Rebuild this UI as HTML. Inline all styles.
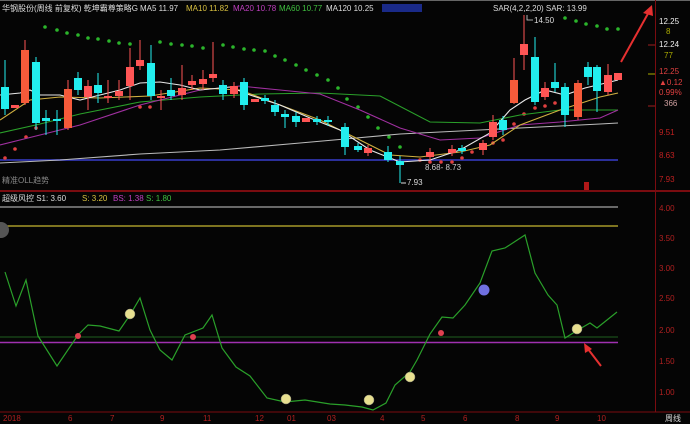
<!DOCTYPE html><html><head><meta charset="utf-8"><style>
body{margin:0;background:#000;width:690px;height:424px;overflow:hidden;font-family:"Liberation Sans","Noto Sans CJK SC",sans-serif}
svg{display:block}
text{font-size:8px}
</style></head><body>
<svg width="690" height="424" viewBox="0 0 690 424">
<rect width="690" height="424" fill="#050505"/>
<line x1="0" y1="0.5" x2="690" y2="0.5" stroke="#666"/>
<line x1="655.5" y1="0" x2="655.5" y2="412" stroke="#7a0c10"/>
<line x1="0" y1="191" x2="690" y2="191" stroke="#7a0c10" stroke-width="2"/>
<line x1="0" y1="412" x2="690" y2="412" stroke="#7a0c10"/>
<line x1="0" y1="160" x2="618" y2="160" stroke="#2b2f9a" stroke-width="2"/>
<text x="2" y="11" fill="#ddd">华钢股份(周线 前复权) 乾坤霸尊策略G</text>
<text x="140" y="11" fill="#ddd">MA5 11.97</text>
<text x="186" y="11" fill="#d8c040">MA10 11.82</text>
<text x="233" y="11" fill="#c040c0">MA20 10.78</text>
<text x="279" y="11" fill="#40c040">MA60 10.77</text>
<text x="326" y="11" fill="#ddd">MA120 10.25</text>
<rect x="382" y="4" width="40" height="8" fill="#1a2a88"/>
<text x="493" y="11" fill="#ddd">SAR(4,2,2,20) SAR: 13.99</text>
<g fill="#2bb52b">
<circle cx="45" cy="27" r="1.8"/><circle cx="57" cy="30" r="1.8"/><circle cx="67" cy="33" r="1.8"/><circle cx="78" cy="35" r="1.8"/><circle cx="88" cy="38" r="1.8"/><circle cx="98" cy="39" r="1.8"/><circle cx="109" cy="41" r="1.8"/><circle cx="119" cy="43" r="1.8"/><circle cx="130" cy="44" r="1.8"/><circle cx="160" cy="42" r="1.8"/><circle cx="171" cy="44" r="1.8"/><circle cx="182" cy="45" r="1.8"/><circle cx="192" cy="46" r="1.8"/><circle cx="203" cy="48" r="1.8"/><circle cx="223" cy="45" r="1.8"/><circle cx="233" cy="47" r="1.8"/><circle cx="244" cy="49" r="1.8"/><circle cx="254" cy="50" r="1.8"/><circle cx="265" cy="51" r="1.8"/><circle cx="275" cy="56" r="1.8"/><circle cx="285" cy="60" r="1.8"/><circle cx="296" cy="65" r="1.8"/><circle cx="306" cy="70" r="1.8"/><circle cx="317" cy="75" r="1.8"/><circle cx="328" cy="80" r="1.8"/><circle cx="338" cy="88" r="1.8"/><circle cx="347" cy="99" r="1.8"/><circle cx="358" cy="107" r="1.8"/><circle cx="368" cy="117" r="1.8"/><circle cx="378" cy="128" r="1.8"/><circle cx="389" cy="137" r="1.8"/><circle cx="400" cy="147" r="1.8"/><circle cx="565" cy="18" r="1.8"/><circle cx="576" cy="21" r="1.8"/><circle cx="586" cy="24" r="1.8"/><circle cx="597" cy="26" r="1.8"/><circle cx="607" cy="29" r="1.8"/><circle cx="618" cy="29" r="1.8"/>
</g>
<g fill="#e04040">
<circle cx="5" cy="158" r="1.8"/><circle cx="15" cy="149" r="1.8"/><circle cx="26" cy="137" r="1.8"/><circle cx="36" cy="128" r="1.8"/><circle cx="140" cy="107" r="1.8"/><circle cx="150" cy="107" r="1.8"/><circle cx="420" cy="160" r="1.8"/><circle cx="430" cy="162" r="1.8"/><circle cx="441" cy="162" r="1.8"/><circle cx="452" cy="162" r="1.8"/><circle cx="462" cy="158" r="1.8"/><circle cx="472" cy="152" r="1.8"/><circle cx="483" cy="147" r="1.8"/><circle cx="493" cy="143" r="1.8"/><circle cx="503" cy="140" r="1.8"/><circle cx="514" cy="124" r="1.8"/><circle cx="524" cy="114" r="1.8"/><circle cx="535" cy="108" r="1.8"/><circle cx="545" cy="106" r="1.8"/><circle cx="555" cy="103" r="1.8"/>
</g>
<g fill="none" stroke-width="1.1">
<polyline stroke="#bbb" points="0,163 60,160 140,154 220,150 300,143 345,139 400,134 480,130 540,127 600,124 618,123"/>
<polyline stroke="#2aa02a" points="0,133 40,124 80,114 140,102 200,97 260,94 320,93 380,96 430,122 480,123 520,115 560,110 618,110"/>
<polyline stroke="#a030a0" points="0,145 40,135 80,125 140,105 200,90 240,86 280,90 320,94 360,110 400,128 440,140 480,138 520,125 560,122 600,118 618,110"/>
<polyline stroke="#d0b040" points="0,120 30,100 60,97 100,98 150,96 200,88 240,90 280,105 320,120 360,140 390,155 420,157 460,152 490,145 520,125 560,110 600,97 618,93"/>
<polyline stroke="#e8e8e8" points="0,95 20,93 30,90 40,95 60,95 80,100 100,95 120,90 140,83 160,82 180,85 200,90 230,87 250,95 280,105 310,118 340,130 370,150 400,162 430,160 460,150 490,133 510,110 525,100 545,90 565,95 585,88 610,82 618,80"/>
</g>
<g id="candles">
<line x1="5" y1="60" x2="5" y2="115" stroke="#2ee" /><rect x="1" y="87" width="8" height="22" fill="#2ee"/>
<rect x="11" y="105" width="8" height="3" fill="#f55"/>
<line x1="25" y1="40" x2="25" y2="105" stroke="#f55"/><rect x="21" y="50" width="8" height="53" fill="#f65a3a"/>
<line x1="36" y1="57" x2="36" y2="130" stroke="#2ee"/><rect x="32" y="62" width="8" height="61" fill="#2ee"/>
<line x1="46" y1="110" x2="46" y2="135" stroke="#2ee"/><rect x="42" y="118" width="8" height="3" fill="#2ee"/>
<line x1="57" y1="110" x2="57" y2="135" stroke="#2ee"/><rect x="53" y="119" width="8" height="2" fill="#2ee"/>
<line x1="68" y1="80" x2="68" y2="130" stroke="#f55"/><rect x="64" y="89" width="8" height="39" fill="#f65a3a"/>
<line x1="78" y1="72" x2="78" y2="95" stroke="#2ee"/><rect x="74" y="78" width="8" height="12" fill="#2ee"/>
<line x1="88" y1="80" x2="88" y2="110" stroke="#f55"/><rect x="84" y="86" width="8" height="11" fill="#f55"/>
<line x1="98" y1="73" x2="98" y2="103" stroke="#2ee"/><rect x="94" y="85" width="8" height="8" fill="#2ee"/>
<line x1="108" y1="80" x2="108" y2="103" stroke="#f55"/><rect x="104" y="96" width="8" height="2" fill="#f55"/>
<line x1="119" y1="80" x2="119" y2="100" stroke="#f55"/><rect x="115" y="91" width="8" height="5" fill="#f55"/>
<line x1="130" y1="48" x2="130" y2="100" stroke="#f55"/><rect x="126" y="67" width="8" height="19" fill="#f55"/>
<line x1="140" y1="40" x2="140" y2="70" stroke="#f55"/><rect x="136" y="60" width="8" height="6" fill="#f55"/>
<line x1="151" y1="45" x2="151" y2="100" stroke="#2ee"/><rect x="147" y="63" width="8" height="33" fill="#2ee"/>
<line x1="161" y1="90" x2="161" y2="110" stroke="#f55"/><rect x="157" y="96" width="8" height="2" fill="#f55"/>
<line x1="171" y1="78" x2="171" y2="100" stroke="#2ee"/><rect x="167" y="90" width="8" height="6" fill="#2ee"/>
<line x1="182" y1="65" x2="182" y2="100" stroke="#f55"/><rect x="178" y="88" width="8" height="7" fill="#f55"/>
<line x1="192" y1="75" x2="192" y2="90" stroke="#f55"/><rect x="188" y="81" width="8" height="4" fill="#f55"/>
<line x1="203" y1="70" x2="203" y2="90" stroke="#f55"/><rect x="199" y="79" width="8" height="5" fill="#f55"/>
<line x1="213" y1="42" x2="213" y2="82" stroke="#f55"/><rect x="209" y="74" width="8" height="4" fill="#f55"/>
<line x1="223" y1="80" x2="223" y2="100" stroke="#2ee"/><rect x="219" y="85" width="8" height="9" fill="#2ee"/>
<line x1="234" y1="82" x2="234" y2="98" stroke="#f55"/><rect x="230" y="86" width="8" height="8" fill="#f55"/>
<line x1="244" y1="78" x2="244" y2="110" stroke="#2ee"/><rect x="240" y="82" width="8" height="23" fill="#2ee"/>
<rect x="251" y="99" width="8" height="3" fill="#f55"/>
<line x1="265" y1="95" x2="265" y2="104" stroke="#2ee"/><rect x="261" y="98" width="8" height="3" fill="#2ee"/>
<line x1="275" y1="100" x2="275" y2="116" stroke="#2ee"/><rect x="271" y="105" width="8" height="7" fill="#2ee"/>
<line x1="285" y1="110" x2="285" y2="128" stroke="#2ee"/><rect x="281" y="114" width="8" height="3" fill="#2ee"/>
<line x1="296" y1="112" x2="296" y2="127" stroke="#2ee"/><rect x="292" y="116" width="8" height="6" fill="#2ee"/>
<rect x="302" y="118" width="8" height="4" fill="#f55"/>
<line x1="317" y1="116" x2="317" y2="125" stroke="#2ee"/><rect x="313" y="119" width="8" height="3" fill="#2ee"/>
<line x1="328" y1="116" x2="328" y2="126" stroke="#2ee"/><rect x="324" y="120" width="8" height="2" fill="#2ee"/>
<line x1="345" y1="123" x2="345" y2="155" stroke="#2ee"/><rect x="341" y="127" width="8" height="20" fill="#2ee"/>
<line x1="358" y1="143" x2="358" y2="152" stroke="#2ee"/><rect x="354" y="146" width="8" height="4" fill="#2ee"/>
<line x1="368" y1="145" x2="368" y2="156" stroke="#f55"/><rect x="364" y="148" width="8" height="5" fill="#f55"/>
<line x1="388" y1="146" x2="388" y2="162" stroke="#2ee"/><rect x="384" y="152" width="8" height="8" fill="#2ee"/>
<line x1="400" y1="156" x2="400" y2="183" stroke="#2ee"/><rect x="396" y="161" width="8" height="4" fill="#2ee"/>
<line x1="430" y1="148" x2="430" y2="160" stroke="#f55"/><rect x="426" y="152" width="8" height="5" fill="#f55"/>
<line x1="452" y1="145" x2="452" y2="156" stroke="#f55"/><rect x="448" y="149" width="8" height="4" fill="#f55"/>
<line x1="462" y1="145" x2="462" y2="154" stroke="#2ee"/><rect x="458" y="148" width="8" height="3" fill="#2ee"/>
<line x1="483" y1="140" x2="483" y2="155" stroke="#f55"/><rect x="479" y="143" width="8" height="7" fill="#f55"/>
<line x1="493" y1="115" x2="493" y2="140" stroke="#f55"/><rect x="489" y="122" width="8" height="15" fill="#f55"/>
<line x1="503" y1="116" x2="503" y2="135" stroke="#2ee"/><rect x="499" y="120" width="8" height="10" fill="#2ee"/>
<line x1="514" y1="58" x2="514" y2="104" stroke="#f55"/><rect x="510" y="80" width="8" height="23" fill="#f65a3a"/>
<line x1="524" y1="15" x2="524" y2="70" stroke="#f55"/><rect x="520" y="44" width="8" height="11" fill="#f55"/>
<line x1="535" y1="37" x2="535" y2="105" stroke="#2ee"/><rect x="531" y="57" width="8" height="45" fill="#2ee"/>
<line x1="545" y1="82" x2="545" y2="100" stroke="#f55"/><rect x="541" y="88" width="8" height="9" fill="#f55"/>
<line x1="555" y1="63" x2="555" y2="92" stroke="#2ee"/><rect x="551" y="82" width="8" height="6" fill="#2ee"/>
<line x1="565" y1="83" x2="565" y2="127" stroke="#2ee"/><rect x="561" y="87" width="8" height="28" fill="#2ee"/>
<line x1="578" y1="80" x2="578" y2="120" stroke="#f55"/><rect x="574" y="83" width="8" height="34" fill="#f65a3a"/>
<line x1="588" y1="62" x2="588" y2="85" stroke="#2ee"/><rect x="584" y="67" width="8" height="10" fill="#2ee"/>
<line x1="597" y1="65" x2="597" y2="112" stroke="#2ee"/><rect x="593" y="67" width="8" height="24" fill="#2ee"/>
<line x1="608" y1="64" x2="608" y2="95" stroke="#f55"/><rect x="604" y="75" width="8" height="17" fill="#f55"/>
<rect x="614" y="73" width="8" height="7" fill="#f55"/>
</g>
<polyline points="527,15 527,20 533,20" fill="none" stroke="#ddd" stroke-width=".8"/>
<text x="534" y="23" fill="#ddd">14.50</text>
<polyline points="401,183 406,183" stroke="#ddd"/>
<text x="407" y="185" fill="#ddd">7.93</text>
<text x="425" y="170" fill="#ccc">8.68- 8.73</text>
<text x="2" y="183" fill="#888">精准OLL趋势</text>
<line x1="621" y1="62" x2="650" y2="10" stroke="#e63030" stroke-width="2"/>
<polygon points="652,5 643,13 653,16" fill="#e63030"/>
<g font-size="8">
<text x="659" y="24" fill="#eee">12.25</text><text x="666" y="34" fill="#aa0">8</text>
<text x="659" y="47" fill="#eee">12.24</text><text x="664" y="58" fill="#aa0">77</text>
<text x="659" y="74" fill="#e04040">12.25</text><text x="659" y="85" fill="#e04040">▲0.12</text>
<text x="659" y="95" fill="#e04040">0.99%</text><text x="664" y="106" fill="#d0a0a0">366</text>
<text x="659" y="135" fill="#c02020">9.51</text><text x="659" y="158" fill="#c02020">8.63</text>
<text x="659" y="182" fill="#c02020">7.93</text>
</g>
<line x1="648" y1="45" x2="655" y2="45" stroke="#a02020"/><line x1="648" y1="74" x2="655" y2="74" stroke="#aa0"/><line x1="648" y1="106" x2="655" y2="106" stroke="#a02020"/>
<rect x="584" y="182" width="5" height="8" fill="#b01818"/>
<text x="2" y="201" fill="#ddd">超级风控 S1: 3.60</text>
<text x="82" y="201" fill="#d8c040">S: 3.20</text>
<text x="113" y="201" fill="#c040c0">BS: 1.38</text>
<text x="146" y="201" fill="#40c040">S: 1.80</text>
<line x1="0" y1="207" x2="618" y2="207" stroke="#ccc"/>
<line x1="0" y1="226" x2="618" y2="226" stroke="#c8b830" stroke-width="1.3"/>
<line x1="0" y1="337" x2="618" y2="337" stroke="#206020"/>
<line x1="0" y1="342.5" x2="618" y2="342.5" stroke="#a030b0" stroke-width="1.5"/>
<circle cx="1" cy="230" r="8" fill="#555"/>
<polyline fill="none" stroke="#2aa02a" stroke-width="1.2" points="5,272 16,306 26,280 38,336 57,366 78,335 88,325 100,326 119,331 130,315 140,298 150,330 160,350 172,360 185,335 203,328 212,315 222,348 236,367 250,376 267,398 285,402 305,400 330,404 345,405 362,407 373,410 386,403 395,385 410,372 417,360 430,334 442,317 453,318 465,305 480,283 492,251 505,248 525,235 535,273 548,295 557,305 565,338 578,330 590,323 597,328 617,312"/>
<g fill="#e04050"><circle cx="78" cy="336" r="3"/><circle cx="193" cy="337" r="3"/><circle cx="441" cy="333" r="3"/></g>
<g fill="#e8e090" stroke="#887" stroke-width=".5">
<circle cx="130" cy="314" r="5"/><circle cx="286" cy="399" r="5"/><circle cx="369" cy="400" r="5"/><circle cx="410" cy="377" r="5"/><circle cx="577" cy="329" r="5"/>
</g>
<circle cx="484" cy="290" r="5.5" fill="#7070e0"/>
<line x1="601" y1="366" x2="588" y2="349" stroke="#e63030" stroke-width="2"/>
<polygon points="584,343 592,349 585,353" fill="#e63030"/>
<g fill="#b02020" font-size="7">
<text x="659" y="211">4.00</text><text x="659" y="241">3.50</text><text x="659" y="271">3.00</text><text x="659" y="301">2.50</text><text x="659" y="333">2.00</text><text x="659" y="364">1.50</text><text x="659" y="395">1.00</text>
<text x="3" y="421">2018</text><text x="68" y="421">6</text><text x="110" y="421">7</text><text x="160" y="421">9</text><text x="203" y="421">11</text><text x="255" y="421">12</text><text x="287" y="421">01</text><text x="327" y="421">03</text><text x="380" y="421">4</text><text x="421" y="421">5</text><text x="463" y="421">6</text><text x="515" y="421">8</text><text x="555" y="421">9</text><text x="597" y="421">10</text>
</g>
<text x="665" y="421" fill="#ddd" font-size="8">周线</text>
</svg>
</body></html>
